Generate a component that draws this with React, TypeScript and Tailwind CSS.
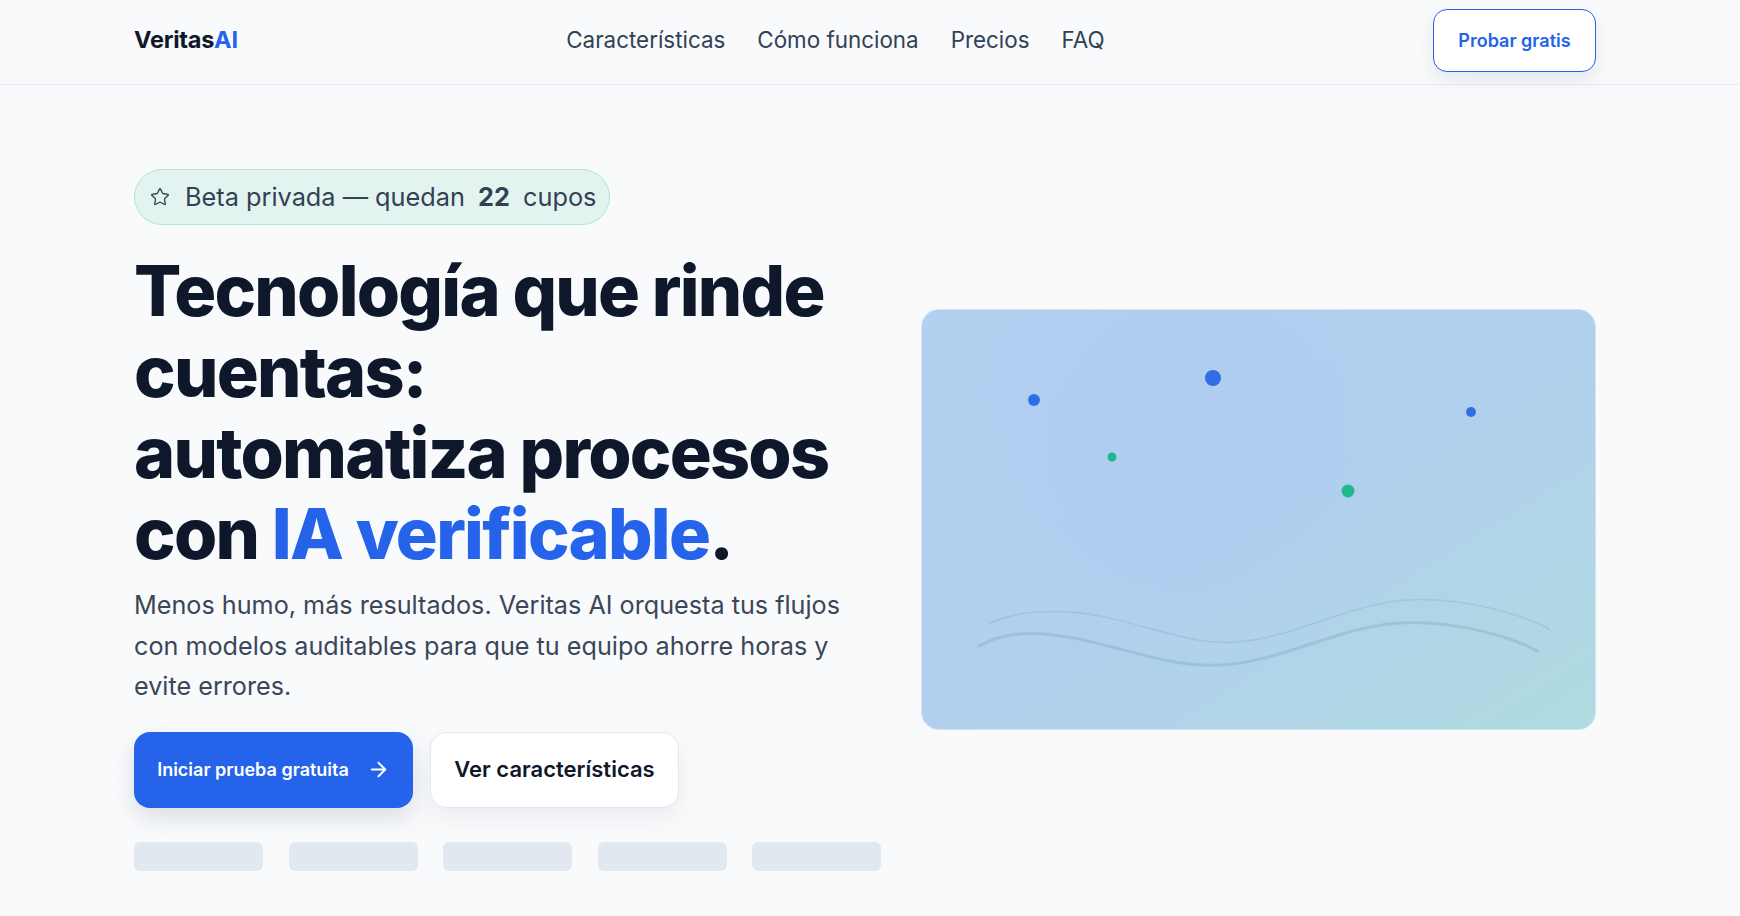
import React from "react";
import { Star, ArrowRight } from "lucide-react";

const font = { fontFamily: "Inter, 'Noto Sans', sans-serif" };

function HeroVisual() {
  const dots = [
    { l: "16.6%", t: "21.4%", s: "w-[12px] h-[12px]", c: "bg-[#2f6ee6]" },
    { l: "43.3%", t: "16.2%", s: "w-[16px] h-[16px]", c: "bg-[#2f6ee6]" },
    { l: "81.6%", t: "24.2%", s: "w-[10px] h-[10px]", c: "bg-[#2f6ee6]" },
    { l: "28.3%", t: "34.9%", s: "w-[9px] h-[9px]", c: "bg-[#1fb98e]" },
    { l: "63.3%", t: "43%", s: "w-[13px] h-[13px]", c: "bg-[#1fb98e]" },
  ];
  return (
    <div className="relative h-[421px] w-full overflow-hidden rounded-[18px] border border-[#d7e2ee] bg-gradient-to-br from-[#b4d0f1] via-[#b1cfee] to-[#afdbe0]">
      <div className="absolute inset-0 bg-[radial-gradient(circle_at_38%_25%,rgba(170,200,244,0.4),rgba(170,200,244,0)_45%)]" />
      <svg
        className="absolute inset-0 h-full w-full"
        viewBox="0 0 675 421"
        preserveAspectRatio="none"
        fill="none"
      >
        <path
          d="M67 315 C85 307 105 303 132 303 C200 303 250 334 304 334 C370 334 430 291 498 291 C550 291 600 305 630 321"
          stroke="rgba(110,150,180,0.22)"
          strokeWidth="1.5"
        />
        <path
          d="M56 338 C75 328 90 325 107 325 C170 325 230 357 290 357 C360 357 420 314 491 314 C540 314 590 328 618 343"
          stroke="rgba(110,150,180,0.28)"
          strokeWidth="3"
        />
      </svg>
      {dots.map((d, i) => (
        <span
          key={i}
          className={`absolute -translate-x-1/2 -translate-y-1/2 rounded-full ${d.s} ${d.c}`}
          style={{ left: d.l, top: d.t }}
        />
      ))}
    </div>
  );
}

export default function App() {
  return (
    <div className="min-h-screen bg-[#f8fafc] text-[#0f172a]" style={font}>
      <header className="border-b border-[#e6e9ee] pb-[4px]">
        <div className="flex h-[80px] items-center justify-between pl-[134px] pr-[144px]">
          <div className="text-[23.5px] font-bold tracking-[-0.01em] text-[#0f172a]">
            Veritas<span className="text-[#2563eb]">AI</span>
          </div>
          <nav className="flex items-center gap-8 text-[22.4px] text-[#334155]">
            <a>Características</a>
            <a>Cómo funciona</a>
            <a>Precios</a>
            <a>FAQ</a>
          </nav>
          <button className="flex h-[63px] w-[163px] items-center justify-center rounded-[14px] border border-[#2563eb] bg-white text-[18px] font-semibold text-[#2563eb] shadow-[0_8px_20px_rgba(15,23,42,0.08)]">
            Probar gratis
          </button>
        </div>
      </header>

      <main className="grid grid-cols-[747px_675px] items-center gap-[40px] pl-[134px] pr-[144px] pt-[84px]">
        <div className="flex flex-col">
          <div className="flex h-[56px] w-fit items-center gap-[15px] rounded-full border border-[#aee5d4] bg-[#e3f4f0] pl-[15px] pr-[13px] text-[25.3px] text-[#334155]">
            <Star className="h-[20px] w-[20px]" strokeWidth={1.6} />
            <span>
              Beta privada — quedan <b className="mx-[6px] font-bold">22</b> cupos
            </span>
          </div>

          <h1 className="mt-[25px] text-[70px] font-extrabold leading-[81px] tracking-[-0.025em] text-[#0f172a]">
            Tecnología que rinde
            <br />
            cuentas:
            <br />
            automatiza procesos
            <br />
            con <span className="text-[#2563eb]">IA verificable</span>.
          </h1>

          <p className="mt-[11px] text-[25.2px] leading-[40.6px] text-[#3b4658]">
            Menos humo, más resultados. Veritas AI orquesta tus flujos con modelos auditables para que tu equipo ahorre horas y evite errores.
          </p>

          <div className="mt-[25px] flex gap-[17px]">
            <button className="flex h-[76px] w-[279px] items-center justify-center gap-[18px] rounded-[16px] bg-[#2563eb] text-[18px] font-semibold text-white shadow-[0_10px_24px_rgba(15,23,42,0.12)]">
              Iniciar prueba gratuita
              <ArrowRight className="h-[23px] w-[23px]" strokeWidth={2} />
            </button>
            <button className="flex h-[76px] w-[249px] items-center justify-center rounded-[16px] border border-[#e2e8f0] bg-white text-[22px] font-semibold text-[#0f172a] shadow-[0_10px_24px_rgba(15,23,42,0.06)]">
              Ver características
            </button>
          </div>

          <div className="mt-[34px] flex gap-[25.5px]">
            {[0, 1, 2, 3, 4].map((i) => (
              <div key={i} className="h-[29px] w-[129px] rounded-[6px] bg-[#e2e8f0]" />
            ))}
          </div>
        </div>

        <HeroVisual />
      </main>
    </div>
  );
}
